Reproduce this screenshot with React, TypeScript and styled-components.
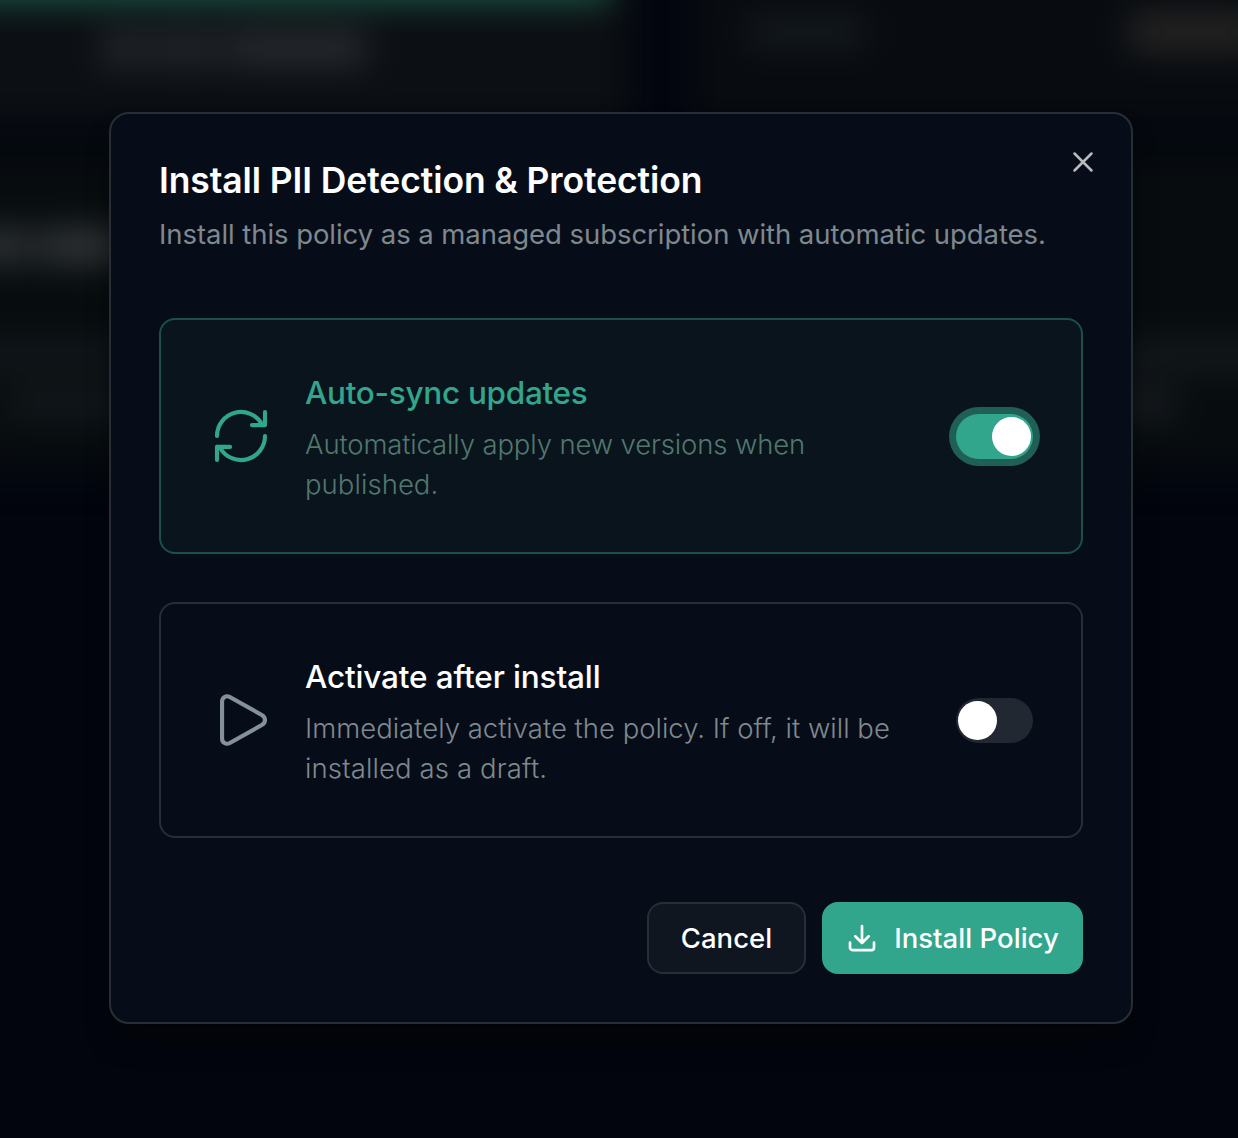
import React, { useState } from "react";
import styled, { createGlobalStyle } from "styled-components";

const GlobalStyle = createGlobalStyle`
  * { box-sizing: border-box; }
  html, body { margin: 0; background: #02050e; }
  body { overflow: hidden; font-family: Inter, "Liberation Sans", sans-serif; }
`;

const Stage = styled.div`
  display: grid;
  grid-template: 1138px / 1238px;
  overflow: hidden;
  > * { grid-area: 1 / 1; }
`;

const Backdrop = styled.div`
  display: grid;
  grid-template: 164px 326px / 692px 586px;
  column-gap: 58px;
  row-gap: 24px;
  margin: -40px 0 0 -60px;
  width: 1360px;
  height: 540px;
  filter: blur(17px);
`;

const Panel = styled.div<{ $wide?: boolean; $tint: string }>`
  grid-column: ${(p) => (p.$wide ? "1 / -1" : "auto")};
  background: ${(p) => p.$tint};
  display: flex;
  flex-direction: column;
`;

const AccentBar = styled.div`
  width: 670px;
  height: 42px;
  background: #1b5546;
`;

const GhostRow = styled.div<{ $top: number; $left?: number; $gap?: number }>`
  display: flex;
  align-items: center;
  gap: ${(p) => p.$gap ?? 0}px;
  margin-top: ${(p) => p.$top}px;
  padding-left: ${(p) => p.$left ?? 0}px;
`;

const Ghost = styled.div<{ $w: number; $h: number; $c: string }>`
  flex: none;
  width: ${(p) => p.$w}px;
  height: ${(p) => p.$h}px;
  background: ${(p) => p.$c};
`;

const Dialog = styled.section`
  position: relative;
  align-self: start;
  width: 1024px;
  height: 912px;
  margin: 112px 0 0 109px;
  padding: 48px;
  display: flex;
  flex-direction: column;
  border: 2px solid #282e36;
  border-radius: 20px;
  background: #070d18;
  box-shadow: 0 20px 30px -10px rgba(3, 4, 6, 0.9);
`;

const Header = styled.header`
  display: flex;
  flex-direction: column;
  height: 156px;
`;

const Title = styled.h2`
  margin: 0;
  font-size: 35.5px;
  line-height: 38px;
  font-weight: 600;
  letter-spacing: -0.11px;
  white-space: nowrap;
  color: #fff;
`;

const Subtitle = styled.p`
  margin: 14px 0 0;
  font-size: 27.5px;
  line-height: 40px;
  letter-spacing: -0.06px;
  white-space: nowrap;
  color: #7e888f;
`;

const CloseButton = styled.button`
  position: absolute;
  top: 32px;
  right: 32px;
  width: 32px;
  height: 32px;
  padding: 0;
  border: 0;
  background: none;
  color: #b9bbbf;
  svg { display: block; }
`;

const Options = styled.div`
  display: flex;
  flex-direction: column;
  gap: 48px;
`;

const OptionCard = styled.div<{ $on: boolean }>`
  display: flex;
  align-items: center;
  height: 236px;
  padding: 48px;
  border: 2px solid ${(p) => (p.$on ? "#1b4f4b" : "#282e36")};
  border-radius: 16px;
  background: ${(p) => (p.$on ? "#0a141d" : "transparent")};
`;

const OptionIcon = styled.svg<{ $on: boolean }>`
  flex: none;
  width: 64px;
  height: 64px;
  margin-right: 32px;
  fill: none;
  stroke: ${(p) => (p.$on ? "#31a68c" : "#849198")};
  stroke-width: 1.55;
  stroke-linecap: round;
  stroke-linejoin: round;
`;

const OptionText = styled.div`
  flex: 1;
  display: flex;
  flex-direction: column;
  gap: 7px;
  padding-top: 1px;
`;

const OptionTitle = styled.div<{ $on: boolean; $track: number }>`
  font-size: 31.5px;
  line-height: 48px;
  font-weight: 500;
  letter-spacing: ${(p) => p.$track}px;
  color: ${(p) => (p.$on ? "#31a68c" : "#fff")};
`;

const OptionDesc = styled.div<{ $on: boolean }>`
  font-size: 27.5px;
  line-height: 40px;
  font-weight: 300;
  white-space: nowrap;
  color: ${(p) => (p.$on ? "#51776e" : "#7f898f")};
`;

const DescLine = styled.span<{ $track: number }>`
  display: block;
  letter-spacing: ${(p) => p.$track}px;
`;

const Track = styled.button<{ $on: boolean }>`
  flex: none;
  display: flex;
  align-items: center;
  justify-content: ${(p) => (p.$on ? "flex-end" : "flex-start")};
  width: 77px;
  height: 45px;
  padding: 0 2.3px;
  border: 0;
  border-radius: 23px;
  background: ${(p) => (p.$on ? "#31a68c" : "#222831")};
  box-shadow: ${(p) => (p.$on ? "0 0 0 7px #1f5f55" : "none")};
`;

const Thumb = styled.span`
  width: 39px;
  height: 39px;
  border-radius: 50%;
  background: #fff;
`;

const Footer = styled.footer`
  display: flex;
  justify-content: flex-end;
  gap: 16px;
  margin-top: 64px;
`;

const Button = styled.button<{ $primary?: boolean }>`
  display: flex;
  align-items: center;
  justify-content: center;
  gap: 16px;
  width: ${(p) => (p.$primary ? 261 : 159)}px;
  height: 72px;
  padding: 0;
  border: 2px solid ${(p) => (p.$primary ? "#31a68c" : "#282e36")};
  border-radius: 16px;
  background: ${(p) => (p.$primary ? "#31a68c" : "#101620")};
  color: #fff;
  font: 500 27.5px/40px Inter, "Liberation Sans", sans-serif;
  letter-spacing: 0.03px;
  white-space: nowrap;
`;

const LineIcon = styled.svg`
  flex: none;
  fill: none;
  stroke: currentColor;
  stroke-linecap: round;
  stroke-linejoin: round;
`;

type OptionProps = {
  title: string;
  lines: { text: string; track: number }[];
  track: number;
  initial: boolean;
  children: React.ReactNode;
};

function Option({ title, lines, track, initial, children }: OptionProps) {
  const [on, setOn] = useState(initial);
  return (
    <OptionCard $on={on}>
      <OptionIcon $on={on} viewBox="0 0 24 24">{children}</OptionIcon>
      <OptionText>
        <OptionTitle $on={on} $track={track}>{title}</OptionTitle>
        <OptionDesc $on={on}>
          {lines.map((line) => (
            <DescLine key={line.text} $track={line.track}>{line.text}</DescLine>
          ))}
        </OptionDesc>
      </OptionText>
      <Track $on={on} role="switch" aria-checked={on} aria-label={title} onClick={() => setOn(!on)}>
        <Thumb />
      </Track>
    </OptionCard>
  );
}

export default function App() {
  return (
    <>
      <GlobalStyle />
      <Stage>
        <Backdrop aria-hidden>
          <Panel $tint="#0c0f13">
            <AccentBar />
            <GhostRow $top={29} $left={164} $gap={6}>
              <Ghost $w={30} $h={34} $c="#292b2f" />
              <Ghost $w={85} $h={34} $c="#222529" />
              <Ghost $w={135} $h={34} $c="#282b2f" />
            </GhostRow>
          </Panel>
          <Panel $tint="#080c10">
            <GhostRow $top={54} $left={58} $gap={264}>
              <Ghost $w={118} $h={30} $c="#151a1e" />
              <Ghost $w={130} $h={36} $c="#272524" />
            </GhostRow>
          </Panel>
          <Panel $wide $tint="#070c0f">
            <GhostRow $top={81} $gap={8}>
              <Ghost $w={90} $h={34} $c="#2f3335" />
              <Ghost $w={90} $h={34} $c="#323638" />
            </GhostRow>
            <GhostRow $top={80} $gap={960}>
              <Ghost $w={210} $h={26} $c="#14191d" />
              <Ghost $w={160} $h={26} $c="#161b1e" />
            </GhostRow>
            <GhostRow $top={20} $left={65} $gap={960}>
              <Ghost $w={145} $h={26} $c="#151a1e" />
              <Ghost $w={66} $h={30} $c="#191d21" />
            </GhostRow>
          </Panel>
        </Backdrop>

        <Dialog role="dialog" aria-label="Install PII Detection & Protection">
          <Header>
            <Title>Install PII Detection &amp; Protection</Title>
            <Subtitle>Install this policy as a managed subscription with automatic updates.</Subtitle>
          </Header>

          <Options>
            <Option
              initial
              track={-0.3}
              title="Auto-sync updates"
              lines={[
                { text: "Automatically apply new versions when", track: -0.14 },
                { text: "published.", track: 0.05 },
              ]}
            >
              <path d="M3 12a9 9 0 0 1 16.8-4.5L21 7.9M21 3v4.9h-4.9" />
              <path d="M21 12a9 9 0 0 1-16.8 4.5L3 16.1M3 21v-4.9h4.9" />
            </Option>
            <Option
              initial={false}
              track={-0.15}
              title="Activate after install"
              lines={[
                { text: "Immediately activate the policy. If off, it will be", track: 0 },
                { text: "installed as a draft.", track: 0.12 },
              ]}
            >
              <path d="M4.9 5.1c0-1.6 1.5-2.5 2.9-1.7l12 6.7c1.6.9 1.6 2.9 0 3.8l-12 6.7c-1.4.8-2.9-.1-2.9-1.7z" />
            </Option>
          </Options>

          <Footer>
            <Button>Cancel</Button>
            <Button $primary>
              <LineIcon width="32" height="32" viewBox="0 0 32 32" strokeWidth="2.67">
                <path d="M16 4v17M9.3 14.3l6.7 6.7 6.7-6.7M4 20.5v5a2.6 2.6 0 0 0 2.6 2.6h18.8a2.6 2.6 0 0 0 2.6-2.6v-5" />
              </LineIcon>
              Install Policy
            </Button>
          </Footer>

          <CloseButton aria-label="Close">
            <LineIcon width="32" height="32" viewBox="0 0 32 32" strokeWidth="2.5">
              <path d="M7.5 7.5l17 17M24.5 7.5l-17 17" />
            </LineIcon>
          </CloseButton>
        </Dialog>
      </Stage>
    </>
  );
}
